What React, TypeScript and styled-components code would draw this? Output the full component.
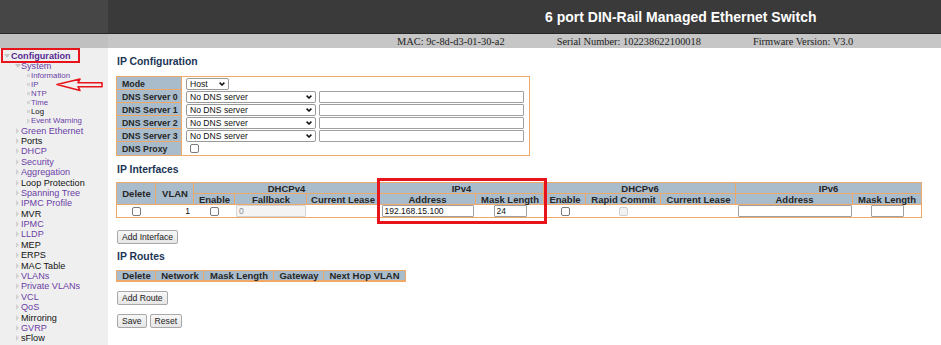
import styled, { createGlobalStyle } from 'styled-components';

type Marker = 'down' | 'right' | 'dot';

interface MenuItem {
  label: string;
  level: 0 | 1 | 2;
  marker: Marker;
  dark?: boolean;
  bold?: boolean;
}

const menu: MenuItem[] = [
  { label: 'Configuration', level: 0, marker: 'down', bold: true },
  { label: 'System', level: 1, marker: 'down' },
  { label: 'Information', level: 2, marker: 'dot' },
  { label: 'IP', level: 2, marker: 'dot' },
  { label: 'NTP', level: 2, marker: 'dot' },
  { label: 'Time', level: 2, marker: 'dot' },
  { label: 'Log', level: 2, marker: 'dot', dark: true },
  { label: 'Event Warning', level: 2, marker: 'right' },
  { label: 'Green Ethernet', level: 1, marker: 'right' },
  { label: 'Ports', level: 1, marker: 'right', dark: true },
  { label: 'DHCP', level: 1, marker: 'right' },
  { label: 'Security', level: 1, marker: 'right' },
  { label: 'Aggregation', level: 1, marker: 'right' },
  { label: 'Loop Protection', level: 1, marker: 'right', dark: true },
  { label: 'Spanning Tree', level: 1, marker: 'right' },
  { label: 'IPMC Profile', level: 1, marker: 'right' },
  { label: 'MVR', level: 1, marker: 'right', dark: true },
  { label: 'IPMC', level: 1, marker: 'right' },
  { label: 'LLDP', level: 1, marker: 'right' },
  { label: 'MEP', level: 1, marker: 'right', dark: true },
  { label: 'ERPS', level: 1, marker: 'right', dark: true },
  { label: 'MAC Table', level: 1, marker: 'right', dark: true },
  { label: 'VLANs', level: 1, marker: 'right' },
  { label: 'Private VLANs', level: 1, marker: 'right' },
  { label: 'VCL', level: 1, marker: 'right' },
  { label: 'QoS', level: 1, marker: 'right' },
  { label: 'Mirroring', level: 1, marker: 'right', dark: true },
  { label: 'GVRP', level: 1, marker: 'right' },
  { label: 'sFlow', level: 1, marker: 'right', dark: true },
];

const GlobalStyle = createGlobalStyle`
  html, body {
    margin: 0;
    padding: 0;
    background: #ffffff;
  }
  body {
    width: 941px;
    height: 345px;
    overflow: hidden;
    font-family: "Liberation Sans", Arial, sans-serif;
  }
`;

const Page = styled.div`
  width: 941px;
  height: 345px;
  display: flex;
  flex-direction: column;
  overflow: hidden;
`;

const TopBar = styled.div`
  display: flex;
  height: 33px;
  background: #3a3a3a;
`;

const TopLeft = styled.div`
  width: 108px;
  background: #464646;
`;

const Title = styled.div`
  flex: 1;
  display: flex;
  align-items: center;
  padding-left: 437px;
  color: #ffffff;
  font-size: 14px;
  font-weight: bold;
`;

const InfoBar = styled.div`
  display: flex;
  height: 14px;
  border-top: 1px solid #262626;
  background: #c6c6c6;
`;

const InfoLeft = styled.div`
  width: 108px;
  background: #c0c0c0;
`;

const InfoItems = styled.div`
  display: flex;
  align-items: center;
  gap: 52px;
  padding-left: 289px;
  font-family: "Liberation Serif", "Times New Roman", serif;
  font-size: 10.4px;
  color: #1e1e1e;
`;

const Body = styled.div`
  flex: 1;
  display: flex;
  min-height: 0;
`;

const Sidebar = styled.div`
  position: relative;
  width: 108px;
  flex-shrink: 0;
  box-sizing: border-box;
  padding-top: 3px;
  background: #efefef;
  overflow: hidden;
`;

const indent = { 0: 3, 1: 14, 2: 25 };
const fontSize = { 0: 9.1, 1: 9.1, 2: 7.8 };
const lineHeight = { 0: 10, 1: 10.4, 2: 9 };

const TreeRow = styled.div<{ $level: 0 | 1 | 2; $dark?: boolean; $bold?: boolean }>`
  display: flex;
  align-items: center;
  padding-left: ${(p) => indent[p.$level]}px;
  height: ${(p) => lineHeight[p.$level]}px;
  font-size: ${(p) => fontSize[p.$level]}px;
  font-weight: ${(p) => (p.$bold ? 'bold' : 'normal')};
  color: ${(p) => (p.$dark ? '#111111' : p.$bold ? '#55288f' : '#6b3ea6')};
  white-space: nowrap;
`;

const MarkerBox = styled.span<{ $level: 0 | 1 | 2 }>`
  display: inline-flex;
  align-items: center;
  justify-content: center;
  width: ${(p) => (p.$level === 2 ? 6 : 7)}px;
  margin-right: ${(p) => (p.$level === 0 ? 1 : 0)}px;
  flex-shrink: 0;
`;

const ConfigMark = styled.div`
  position: absolute;
  left: 1px;
  top: 0;
  width: 79px;
  height: 15px;
  box-sizing: border-box;
  border: 2px solid #e8141c;
`;

const ArrowMark = styled.svg`
  position: absolute;
  left: 56px;
  top: 30px;
`;

const Main = styled.div`
  flex: 1;
  padding-left: 8px;
  display: flex;
  flex-direction: column;
  align-items: flex-start;
`;

const Heading = styled.div<{ $top: number; $bottom: number }>`
  margin: ${(p) => p.$top}px 0 ${(p) => p.$bottom}px 1px;
  height: 12px;
  line-height: 12px;
  font-size: 10.4px;
  font-weight: bold;
  color: #1c3556;
`;

const Grid = styled.table<{ $width: number }>`
  width: ${(p) => p.$width}px;
  border-collapse: separate;
  border-spacing: 0;
  table-layout: fixed;
  border: 1px solid #f0a868;
`;

const Row = styled.tr<{ $h: number }>`
  height: ${(p) => p.$h}px;
`;

const LabelCell = styled.td<{ $last?: boolean }>`
  height: 13px;
  box-sizing: border-box;
  background-color: #a9bccc;
  box-shadow: inset -1px ${(p) => (p.$last ? 0 : -1)}px 0 #f0a868;
  padding: 0 0 0 5px;
  text-align: left;
  vertical-align: middle;
  font-size: 8.8px;
  font-weight: bold;
  line-height: 10px;
  color: #262626;
  white-space: nowrap;
`;

const ValueCell = styled.td`
  padding: 0 0 0 4px;
  vertical-align: middle;
  line-height: 0;
`;

const InlineControls = styled.div<{ $indent?: number }>`
  display: flex;
  align-items: center;
  gap: 3px;
  padding-left: ${(p) => p.$indent ?? 0}px;
`;

const HeadCell = styled.td<{ $last?: boolean }>`
  background-color: #a9bccc;
  box-shadow: inset ${(p) => (p.$last ? 0 : -1)}px -1px 0 #f0a868;
  padding: 0;
  text-align: center;
  vertical-align: middle;
  font-size: 9.5px;
  font-weight: bold;
  color: #262626;
  white-space: nowrap;
  line-height: 10px;
`;

const DataCell = styled.td<{ $align?: 'left' | 'center' | 'right' }>`
  padding: 0 ${(p) => (p.$align === 'right' ? 4 : 0)}px 0 0;
  text-align: ${(p) => p.$align ?? 'center'};
  vertical-align: middle;
  font-size: 8.6px;
  color: #111111;
  line-height: 0;
`;

const NumText = styled.span`
  line-height: 12px;
`;

const SelectBox = styled.div<{ $width: number }>`
  position: relative;
  width: ${(p) => p.$width}px;
  height: 12px;
  flex-shrink: 0;
`;

const NativeSelect = styled.select`
  display: block;
  appearance: none;
  width: 100%;
  height: 12px;
  box-sizing: border-box;
  margin: 0;
  padding: 0 0 0 3px;
  border: 1px solid #9a9a9a;
  border-radius: 2px;
  background: #ffffff;
  font-family: "Liberation Sans", Arial, sans-serif;
  font-size: 8.6px;
  line-height: 10px;
  color: #111111;
`;

const Chevron = styled.svg`
  position: absolute;
  right: 4px;
  top: 4px;
  pointer-events: none;
`;

const TextInput = styled.input<{ $width: number; $disabled?: boolean }>`
  width: ${(p) => p.$width}px;
  height: 12px;
  box-sizing: border-box;
  margin: 0;
  padding: 0 0 0 2px;
  border: 1px solid ${(p) => (p.$disabled ? '#d6d6d6' : '#a0a0a0')};
  border-radius: 1px;
  background: ${(p) => (p.$disabled ? '#f4f4f4' : '#ffffff')};
  font-family: "Liberation Sans", Arial, sans-serif;
  font-size: 8.5px;
  color: ${(p) => (p.$disabled ? '#8a8a8a' : '#111111')};
  vertical-align: middle;
  outline: none;
`;

const Check = styled.input.attrs({ type: 'checkbox' })<{ $disabled?: boolean }>`
  appearance: none;
  width: 9px;
  height: 9px;
  margin: 0;
  box-sizing: border-box;
  border: 1px solid ${(p) => (p.$disabled ? '#cfcfcf' : '#7a7a7a')};
  border-radius: 2px;
  background: ${(p) => (p.$disabled ? '#f2f2f2' : '#ffffff')};
  vertical-align: middle;
`;

const TableWrap = styled.div`
  position: relative;
`;

const IPv4Mark = styled.div`
  position: absolute;
  left: 261px;
  top: -4px;
  width: 170px;
  height: 46px;
  box-sizing: border-box;
  border: 3px solid #e8141c;
  pointer-events: none;
`;

const Button = styled.button`
  height: 14px;
  box-sizing: border-box;
  margin: 0;
  padding: 0 4px;
  border: 1px solid #a8a8a8;
  border-radius: 2px;
  background: linear-gradient(#f7f7f7, #e6e6e6);
  font-family: "Liberation Sans", Arial, sans-serif;
  font-size: 8.6px;
  line-height: 12px;
  color: #222222;
`;

const ButtonRow = styled.div<{ $top: number }>`
  display: flex;
  gap: 3px;
  margin: ${(p) => p.$top}px 0 0 1px;
`;

function TreeMarker({ type }: { type: Marker }) {
  if (type === 'down') {
    return (
      <svg width="6" height="4" viewBox="0 0 6 4">
        <path d="M0 0 L6 0 L3 4 Z" fill="#c4c4c4" />
      </svg>
    );
  }
  if (type === 'right') {
    return (
      <svg width="3" height="6" viewBox="0 0 3 6">
        <path d="M0 0 L3 3 L0 6 Z" fill="#d2d2d2" />
      </svg>
    );
  }
  return (
    <svg width="3" height="3" viewBox="0 0 3 3">
      <rect x="0" y="0" width="3" height="3" fill="#d6d6d6" />
    </svg>
  );
}

function Select({ width, value }: { width: number; value: string }) {
  return (
    <SelectBox $width={width}>
      <NativeSelect defaultValue={value}>
        <option>{value}</option>
      </NativeSelect>
      <Chevron width="6" height="4" viewBox="0 0 6 4">
        <path d="M0.6 0.6 L3 3 L5.4 0.6" fill="none" stroke="#111" strokeWidth="1.5" />
      </Chevron>
    </SelectBox>
  );
}

const dnsRows = ['DNS Server 0', 'DNS Server 1', 'DNS Server 2', 'DNS Server 3'];

const ifaceCols = [39, 38, 41, 72, 72, 97, 68, 42, 75, 75, 117, 68];
const routeCols = [39, 48, 70, 50, 81];

export default function App() {
  return (
    <Page>
      <GlobalStyle />
      <TopBar>
        <TopLeft />
        <Title>6 port DIN-Rail Managed Ethernet Switch</Title>
      </TopBar>
      <InfoBar>
        <InfoLeft />
        <InfoItems>
          <span>MAC: 9c-8d-d3-01-30-a2</span>
          <span>Serial Number: 102238622100018</span>
          <span>Firmware Version: V3.0</span>
        </InfoItems>
      </InfoBar>

      <Body>
        <Sidebar>
          {menu.map((item) => (
            <TreeRow key={item.label} $level={item.level} $dark={item.dark} $bold={item.bold}>
              <MarkerBox $level={item.level}>
                <TreeMarker type={item.marker} />
              </MarkerBox>
              {item.label}
            </TreeRow>
          ))}
          <ConfigMark />
          <ArrowMark width="50" height="14" viewBox="0 0 50 14">
            <path
              d="M1 6.5 L24 1 L22 4.7 L46 4.7 L46 8.7 L22 8.7 L24 12.5 Z"
              fill="none"
              stroke="#e8141c"
              strokeWidth="1.6"
              strokeLinejoin="round"
            />
          </ArrowMark>
        </Sidebar>

        <Main>
          <Heading $top={8} $bottom={8}>IP Configuration</Heading>
          <Grid $width={414}>
            <colgroup>
              <col style={{ width: 65 }} />
              <col />
            </colgroup>
            <tbody>
              <Row $h={13}>
                <LabelCell>Mode</LabelCell>
                <ValueCell>
                  <InlineControls>
                    <Select width={43} value="Host" />
                  </InlineControls>
                </ValueCell>
              </Row>
              {dnsRows.map((label) => (
                <Row $h={13} key={label}>
                  <LabelCell>{label}</LabelCell>
                  <ValueCell>
                    <InlineControls>
                      <Select width={130} value="No DNS server" />
                      <TextInput $width={205} type="text" defaultValue="" />
                    </InlineControls>
                  </ValueCell>
                </Row>
              ))}
              <Row $h={13}>
                <LabelCell $last>DNS Proxy</LabelCell>
                <ValueCell>
                  <InlineControls $indent={4}>
                    <Check />
                  </InlineControls>
                </ValueCell>
              </Row>
            </tbody>
          </Grid>

          <Heading $top={8} $bottom={6}>IP Interfaces</Heading>
          <TableWrap>
            <Grid $width={804}>
              <colgroup>
                {ifaceCols.map((w, i) => (
                  <col key={i} style={{ width: w }} />
                ))}
              </colgroup>
              <thead>
                <Row $h={11}>
                  <HeadCell rowSpan={2}>Delete</HeadCell>
                  <HeadCell rowSpan={2}>VLAN</HeadCell>
                  <HeadCell colSpan={3}>DHCPv4</HeadCell>
                  <HeadCell colSpan={2}>IPv4</HeadCell>
                  <HeadCell colSpan={3}>DHCPv6</HeadCell>
                  <HeadCell colSpan={2} $last>IPv6</HeadCell>
                </Row>
                <Row $h={11}>
                  <HeadCell>Enable</HeadCell>
                  <HeadCell>Fallback</HeadCell>
                  <HeadCell>Current Lease</HeadCell>
                  <HeadCell>Address</HeadCell>
                  <HeadCell>Mask Length</HeadCell>
                  <HeadCell>Enable</HeadCell>
                  <HeadCell>Rapid Commit</HeadCell>
                  <HeadCell>Current Lease</HeadCell>
                  <HeadCell>Address</HeadCell>
                  <HeadCell $last>Mask Length</HeadCell>
                </Row>
              </thead>
              <tbody>
                <Row $h={12}>
                  <DataCell><Check /></DataCell>
                  <DataCell $align="right"><NumText>1</NumText></DataCell>
                  <DataCell><Check /></DataCell>
                  <DataCell><TextInput $width={70} $disabled type="text" defaultValue="0" /></DataCell>
                  <DataCell />
                  <DataCell><TextInput $width={92} type="text" defaultValue="192.168.15.100" /></DataCell>
                  <DataCell><TextInput $width={33} type="text" defaultValue="24" /></DataCell>
                  <DataCell><Check /></DataCell>
                  <DataCell><Check $disabled /></DataCell>
                  <DataCell />
                  <DataCell><TextInput $width={114} type="text" defaultValue="" /></DataCell>
                  <DataCell><TextInput $width={33} type="text" defaultValue="" /></DataCell>
                </Row>
              </tbody>
            </Grid>
            <IPv4Mark />
          </TableWrap>
          <ButtonRow $top={12}>
            <Button>Add Interface</Button>
          </ButtonRow>

          <Heading $top={7} $bottom={7}>IP Routes</Heading>
          <Grid $width={288}>
            <colgroup>
              {routeCols.map((w, i) => (
                <col key={i} style={{ width: w }} />
              ))}
            </colgroup>
            <thead>
              <Row $h={10}>
                <HeadCell>Delete</HeadCell>
                <HeadCell>Network</HeadCell>
                <HeadCell>Mask Length</HeadCell>
                <HeadCell>Gateway</HeadCell>
                <HeadCell $last>Next Hop VLAN</HeadCell>
              </Row>
            </thead>
          </Grid>
          <ButtonRow $top={9}>
            <Button>Add Route</Button>
          </ButtonRow>
          <ButtonRow $top={9}>
            <Button>Save</Button>
            <Button>Reset</Button>
          </ButtonRow>
        </Main>
      </Body>
    </Page>
  );
}
